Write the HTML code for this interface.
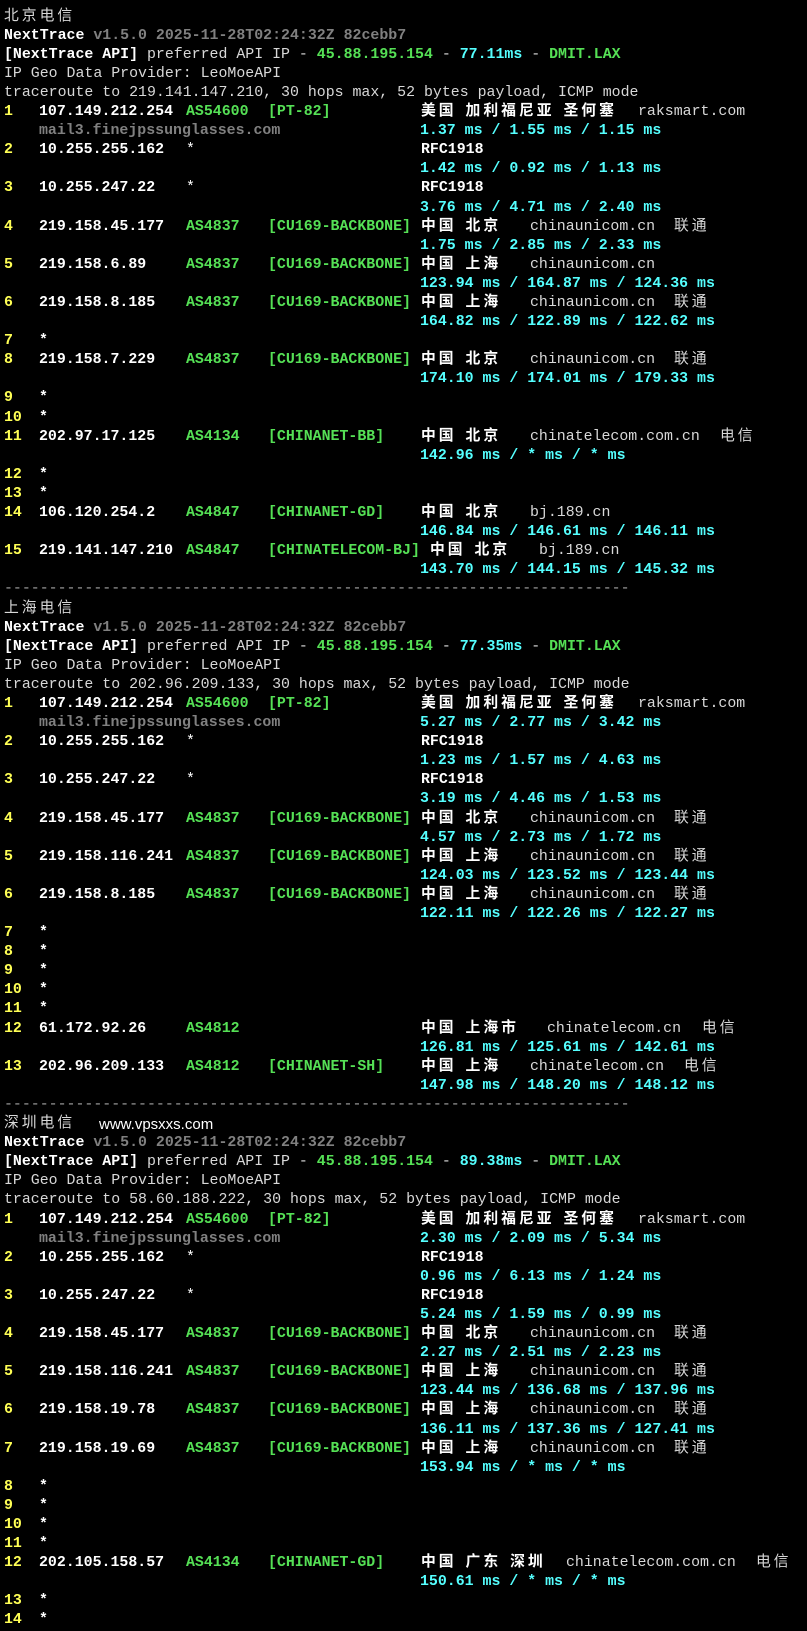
<!DOCTYPE html>
<html><head><meta charset="utf-8">
<style>
html,body{margin:0;padding:0;background:#000;}
body{width:807px;height:1616px;overflow:hidden;padding-top:7.6px;box-sizing:border-box;
font-family:"Liberation Mono","Noto Sans CJK SC",monospace;font-size:14.9px;color:#d8d8d8;}
.l{position:relative;height:19.1px;line-height:19.1px;white-space:pre;}
.l>*{position:absolute;top:0;}
.t{height:19.1px;line-height:19.1px;white-space:pre;padding-left:4px;overflow:visible;}
.c{letter-spacing:3px;font-family:"Noto Sans CJK SC",sans-serif;font-size:14.8px;line-height:0;}
b{font-weight:bold;}
.n{left:4px;color:#ffff55;font-weight:bold;}
.ip{left:39px;color:#fff;font-weight:bold;}
.as{left:186px;color:#55e055;font-weight:bold;}
.st{left:186px;color:#fff;}
.tg{left:268px;color:#55e055;font-weight:bold;}
.g{left:421px;color:#fff;font-weight:bold;}
.r{left:420px;color:#55ffff;font-weight:bold;}
.h{color:#d8d8d8;}
.gr{left:39px;color:#808080;font-weight:bold;}
.w{color:#fff;font-weight:bold;}
.gy{color:#808080;font-weight:bold;}
.gn{color:#55e055;font-weight:bold;}
.cy{color:#55ffff;font-weight:bold;}
.sep{color:#a0a0a0;}
</style></head><body>

<div class="t"><span class="c">北京电信</span></div>
<div class="t"><b class="w">NextTrace</b> <span class="gy">v1.5.0 2025-11-28T02:24:32Z 82cebb7</span></div>
<div class="t"><b class="w">[NextTrace API]</b> preferred API IP - <b class="gn">45.88.195.154</b> - <b class="cy">77.11ms</b> - <b class="gn">DMIT.LAX</b></div>
<div class="t">IP Geo Data Provider: LeoMoeAPI</div>
<div class="t">traceroute to 219.141.147.210, 30 hops max, 52 bytes payload, ICMP mode</div>
<div class="l"><span class="n">1</span><span class="ip">107.149.212.254</span><span class="as">AS54600</span><span class="tg">[PT-82]</span><span class="g"><span class="c">美国</span> <span class="c">加利福尼亚</span> <span class="c">圣何塞</span></span><span class="h" style="left:638px">raksmart.com</span></div>
<div class="l"><span class="gr">mail3.finejpssunglasses.com</span><span class="r">1.37 ms / 1.55 ms / 1.15 ms</span></div>
<div class="l"><span class="n">2</span><span class="ip">10.255.255.162</span><span class="st">*</span><span class="g">RFC1918</span></div>
<div class="l"><span class="r">1.42 ms / 0.92 ms / 1.13 ms</span></div>
<div class="l"><span class="n">3</span><span class="ip">10.255.247.22</span><span class="st">*</span><span class="g">RFC1918</span></div>
<div class="l"><span class="r">3.76 ms / 4.71 ms / 2.40 ms</span></div>
<div class="l"><span class="n">4</span><span class="ip">219.158.45.177</span><span class="as">AS4837</span><span class="tg">[CU169-BACKBONE]</span><span class="g"><span class="c">中国</span> <span class="c">北京</span></span><span class="h" style="left:530px">chinaunicom.cn</span><span class="h" style="left:674px"><span class="c">联通</span></span></div>
<div class="l"><span class="r">1.75 ms / 2.85 ms / 2.33 ms</span></div>
<div class="l"><span class="n">5</span><span class="ip">219.158.6.89</span><span class="as">AS4837</span><span class="tg">[CU169-BACKBONE]</span><span class="g"><span class="c">中国</span> <span class="c">上海</span></span><span class="h" style="left:530px">chinaunicom.cn</span></div>
<div class="l"><span class="r">123.94 ms / 164.87 ms / 124.36 ms</span></div>
<div class="l"><span class="n">6</span><span class="ip">219.158.8.185</span><span class="as">AS4837</span><span class="tg">[CU169-BACKBONE]</span><span class="g"><span class="c">中国</span> <span class="c">上海</span></span><span class="h" style="left:530px">chinaunicom.cn</span><span class="h" style="left:674px"><span class="c">联通</span></span></div>
<div class="l"><span class="r">164.82 ms / 122.89 ms / 122.62 ms</span></div>
<div class="l"><span class="n">7</span><span class="ip">*</span></div>
<div class="l"><span class="n">8</span><span class="ip">219.158.7.229</span><span class="as">AS4837</span><span class="tg">[CU169-BACKBONE]</span><span class="g"><span class="c">中国</span> <span class="c">北京</span></span><span class="h" style="left:530px">chinaunicom.cn</span><span class="h" style="left:674px"><span class="c">联通</span></span></div>
<div class="l"><span class="r">174.10 ms / 174.01 ms / 179.33 ms</span></div>
<div class="l"><span class="n">9</span><span class="ip">*</span></div>
<div class="l"><span class="n">10</span><span class="ip">*</span></div>
<div class="l"><span class="n">11</span><span class="ip">202.97.17.125</span><span class="as">AS4134</span><span class="tg">[CHINANET-BB]</span><span class="g"><span class="c">中国</span> <span class="c">北京</span></span><span class="h" style="left:530px">chinatelecom.com.cn</span><span class="h" style="left:720px"><span class="c">电信</span></span></div>
<div class="l"><span class="r">142.96 ms / * ms / * ms</span></div>
<div class="l"><span class="n">12</span><span class="ip">*</span></div>
<div class="l"><span class="n">13</span><span class="ip">*</span></div>
<div class="l"><span class="n">14</span><span class="ip">106.120.254.2</span><span class="as">AS4847</span><span class="tg">[CHINANET-GD]</span><span class="g"><span class="c">中国</span> <span class="c">北京</span></span><span class="h" style="left:530px">bj.189.cn</span></div>
<div class="l"><span class="r">146.84 ms / 146.61 ms / 146.11 ms</span></div>
<div class="l"><span class="n">15</span><span class="ip">219.141.147.210</span><span class="as">AS4847</span><span class="tg">[CHINATELECOM-BJ]</span><span class="g" style="left:430px"><span class="c">中国</span> <span class="c">北京</span></span><span class="h" style="left:539px">bj.189.cn</span></div>
<div class="l"><span class="r">143.70 ms / 144.15 ms / 145.32 ms</span></div>
<div class="t sep">----------------------------------------------------------------------</div>

<div class="t"><span class="c">上海电信</span></div>
<div class="t"><b class="w">NextTrace</b> <span class="gy">v1.5.0 2025-11-28T02:24:32Z 82cebb7</span></div>
<div class="t"><b class="w">[NextTrace API]</b> preferred API IP - <b class="gn">45.88.195.154</b> - <b class="cy">77.35ms</b> - <b class="gn">DMIT.LAX</b></div>
<div class="t">IP Geo Data Provider: LeoMoeAPI</div>
<div class="t">traceroute to 202.96.209.133, 30 hops max, 52 bytes payload, ICMP mode</div>
<div class="l"><span class="n">1</span><span class="ip">107.149.212.254</span><span class="as">AS54600</span><span class="tg">[PT-82]</span><span class="g"><span class="c">美国</span> <span class="c">加利福尼亚</span> <span class="c">圣何塞</span></span><span class="h" style="left:638px">raksmart.com</span></div>
<div class="l"><span class="gr">mail3.finejpssunglasses.com</span><span class="r">5.27 ms / 2.77 ms / 3.42 ms</span></div>
<div class="l"><span class="n">2</span><span class="ip">10.255.255.162</span><span class="st">*</span><span class="g">RFC1918</span></div>
<div class="l"><span class="r">1.23 ms / 1.57 ms / 4.63 ms</span></div>
<div class="l"><span class="n">3</span><span class="ip">10.255.247.22</span><span class="st">*</span><span class="g">RFC1918</span></div>
<div class="l"><span class="r">3.19 ms / 4.46 ms / 1.53 ms</span></div>
<div class="l"><span class="n">4</span><span class="ip">219.158.45.177</span><span class="as">AS4837</span><span class="tg">[CU169-BACKBONE]</span><span class="g"><span class="c">中国</span> <span class="c">北京</span></span><span class="h" style="left:530px">chinaunicom.cn</span><span class="h" style="left:674px"><span class="c">联通</span></span></div>
<div class="l"><span class="r">4.57 ms / 2.73 ms / 1.72 ms</span></div>
<div class="l"><span class="n">5</span><span class="ip">219.158.116.241</span><span class="as">AS4837</span><span class="tg">[CU169-BACKBONE]</span><span class="g"><span class="c">中国</span> <span class="c">上海</span></span><span class="h" style="left:530px">chinaunicom.cn</span><span class="h" style="left:674px"><span class="c">联通</span></span></div>
<div class="l"><span class="r">124.03 ms / 123.52 ms / 123.44 ms</span></div>
<div class="l"><span class="n">6</span><span class="ip">219.158.8.185</span><span class="as">AS4837</span><span class="tg">[CU169-BACKBONE]</span><span class="g"><span class="c">中国</span> <span class="c">上海</span></span><span class="h" style="left:530px">chinaunicom.cn</span><span class="h" style="left:674px"><span class="c">联通</span></span></div>
<div class="l"><span class="r">122.11 ms / 122.26 ms / 122.27 ms</span></div>
<div class="l"><span class="n">7</span><span class="ip">*</span></div>
<div class="l"><span class="n">8</span><span class="ip">*</span></div>
<div class="l"><span class="n">9</span><span class="ip">*</span></div>
<div class="l"><span class="n">10</span><span class="ip">*</span></div>
<div class="l"><span class="n">11</span><span class="ip">*</span></div>
<div class="l"><span class="n">12</span><span class="ip">61.172.92.26</span><span class="as">AS4812</span><span class="g"><span class="c">中国</span> <span class="c">上海市</span></span><span class="h" style="left:547px">chinatelecom.cn</span><span class="h" style="left:702px"><span class="c">电信</span></span></div>
<div class="l"><span class="r">126.81 ms / 125.61 ms / 142.61 ms</span></div>
<div class="l"><span class="n">13</span><span class="ip">202.96.209.133</span><span class="as">AS4812</span><span class="tg">[CHINANET-SH]</span><span class="g"><span class="c">中国</span> <span class="c">上海</span></span><span class="h" style="left:530px">chinatelecom.cn</span><span class="h" style="left:684px"><span class="c">电信</span></span></div>
<div class="l"><span class="r">147.98 ms / 148.20 ms / 148.12 ms</span></div>
<div class="t sep">----------------------------------------------------------------------</div>

<div class="l"><span style="left:4px"><span class="c">深圳电信</span></span><span style="left:99px;font-family:'Liberation Sans',sans-serif;font-size:15px;color:#fff;">www.vpsxxs.com</span></div>
<div class="t"><b class="w">NextTrace</b> <span class="gy">v1.5.0 2025-11-28T02:24:32Z 82cebb7</span></div>
<div class="t"><b class="w">[NextTrace API]</b> preferred API IP - <b class="gn">45.88.195.154</b> - <b class="cy">89.38ms</b> - <b class="gn">DMIT.LAX</b></div>
<div class="t">IP Geo Data Provider: LeoMoeAPI</div>
<div class="t">traceroute to 58.60.188.222, 30 hops max, 52 bytes payload, ICMP mode</div>
<div class="l"><span class="n">1</span><span class="ip">107.149.212.254</span><span class="as">AS54600</span><span class="tg">[PT-82]</span><span class="g"><span class="c">美国</span> <span class="c">加利福尼亚</span> <span class="c">圣何塞</span></span><span class="h" style="left:638px">raksmart.com</span></div>
<div class="l"><span class="gr">mail3.finejpssunglasses.com</span><span class="r">2.30 ms / 2.09 ms / 5.34 ms</span></div>
<div class="l"><span class="n">2</span><span class="ip">10.255.255.162</span><span class="st">*</span><span class="g">RFC1918</span></div>
<div class="l"><span class="r">0.96 ms / 6.13 ms / 1.24 ms</span></div>
<div class="l"><span class="n">3</span><span class="ip">10.255.247.22</span><span class="st">*</span><span class="g">RFC1918</span></div>
<div class="l"><span class="r">5.24 ms / 1.59 ms / 0.99 ms</span></div>
<div class="l"><span class="n">4</span><span class="ip">219.158.45.177</span><span class="as">AS4837</span><span class="tg">[CU169-BACKBONE]</span><span class="g"><span class="c">中国</span> <span class="c">北京</span></span><span class="h" style="left:530px">chinaunicom.cn</span><span class="h" style="left:674px"><span class="c">联通</span></span></div>
<div class="l"><span class="r">2.27 ms / 2.51 ms / 2.23 ms</span></div>
<div class="l"><span class="n">5</span><span class="ip">219.158.116.241</span><span class="as">AS4837</span><span class="tg">[CU169-BACKBONE]</span><span class="g"><span class="c">中国</span> <span class="c">上海</span></span><span class="h" style="left:530px">chinaunicom.cn</span><span class="h" style="left:674px"><span class="c">联通</span></span></div>
<div class="l"><span class="r">123.44 ms / 136.68 ms / 137.96 ms</span></div>
<div class="l"><span class="n">6</span><span class="ip">219.158.19.78</span><span class="as">AS4837</span><span class="tg">[CU169-BACKBONE]</span><span class="g"><span class="c">中国</span> <span class="c">上海</span></span><span class="h" style="left:530px">chinaunicom.cn</span><span class="h" style="left:674px"><span class="c">联通</span></span></div>
<div class="l"><span class="r">136.11 ms / 137.36 ms / 127.41 ms</span></div>
<div class="l"><span class="n">7</span><span class="ip">219.158.19.69</span><span class="as">AS4837</span><span class="tg">[CU169-BACKBONE]</span><span class="g"><span class="c">中国</span> <span class="c">上海</span></span><span class="h" style="left:530px">chinaunicom.cn</span><span class="h" style="left:674px"><span class="c">联通</span></span></div>
<div class="l"><span class="r">153.94 ms / * ms / * ms</span></div>
<div class="l"><span class="n">8</span><span class="ip">*</span></div>
<div class="l"><span class="n">9</span><span class="ip">*</span></div>
<div class="l"><span class="n">10</span><span class="ip">*</span></div>
<div class="l"><span class="n">11</span><span class="ip">*</span></div>
<div class="l"><span class="n">12</span><span class="ip">202.105.158.57</span><span class="as">AS4134</span><span class="tg">[CHINANET-GD]</span><span class="g"><span class="c">中国</span> <span class="c">广东</span> <span class="c">深圳</span></span><span class="h" style="left:566px">chinatelecom.com.cn</span><span class="h" style="left:756px"><span class="c">电信</span></span></div>
<div class="l"><span class="r">150.61 ms / * ms / * ms</span></div>
<div class="l"><span class="n">13</span><span class="ip">*</span></div>
<div class="l"><span class="n">14</span><span class="ip">*</span></div>
</body></html>
